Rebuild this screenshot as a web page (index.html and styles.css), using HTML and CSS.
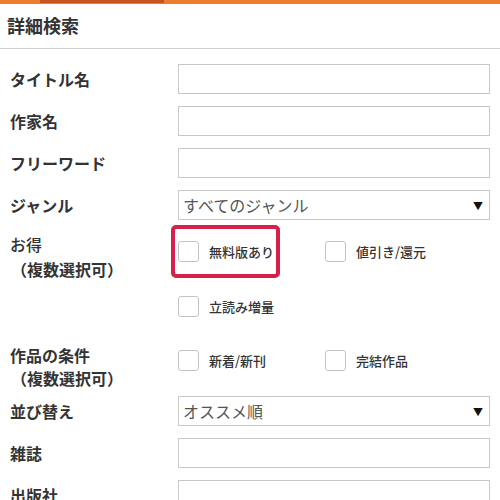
FILE: index.html
```html
<!DOCTYPE html>
<html lang="ja">
<head>
<meta charset="utf-8">
<title>詳細検索</title>
<link rel="stylesheet" href="styles.css">
</head>
<body>
<div class="topbar"><span class="topbar-dark"></span></div>
<header class="page-head"><h1 class="page-title">詳細検索</h1></header>
<form class="search-form">
  <div class="row">
    <label class="row-label">タイトル名</label>
    <div class="text-input"></div>
  </div>
  <div class="row">
    <label class="row-label">作家名</label>
    <div class="text-input"></div>
  </div>
  <div class="row">
    <label class="row-label">フリーワード</label>
    <div class="text-input"></div>
  </div>
  <div class="row">
    <label class="row-label">ジャンル</label>
    <div class="select-box"><span class="select-text">すべてのジャンル</span><span class="select-arrow">▼</span></div>
  </div>
  <div class="row row-checks row-deal">
    <div class="row-label multi"><span class="main light">お得</span><br><span class="sub">（複数選択可）</span></div>
    <div class="check-grid">
      <div class="check-item highlighted"><span class="check"></span><span class="check-text">無料版あり</span></div>
      <div class="check-item"><span class="check"></span><span class="check-text">値引き/還元</span></div>
      <div class="check-item"><span class="check"></span><span class="check-text">立読み増量</span></div>
    </div>
  </div>
  <div class="row row-checks row-cond">
    <div class="row-label multi"><span class="main">作品の条件</span><br><span class="sub">（複数選択可）</span></div>
    <div class="check-grid">
      <div class="check-item"><span class="check"></span><span class="check-text">新着/新刊</span></div>
      <div class="check-item"><span class="check"></span><span class="check-text">完結作品</span></div>
    </div>
  </div>
  <div class="row">
    <label class="row-label">並び替え</label>
    <div class="select-box"><span class="select-text">オススメ順</span><span class="select-arrow">▼</span></div>
  </div>
  <div class="row">
    <label class="row-label">雑誌</label>
    <div class="text-input"></div>
  </div>
  <div class="row">
    <label class="row-label">出版社</label>
    <div class="text-input"></div>
  </div>
</form>
</body>
</html>
```
FILE: styles.css
```css
html, body {
  margin: 0;
  padding: 0;
  background: #fff;
  overflow: hidden;
}
body {
  font-family: "Noto Sans CJK JP", "Noto Sans", sans-serif;
  color: #333;
  width: 500px;
  height: 500px;
}
.topbar {
  height: 4px;
  background: #ee7b2f;
  display: flex;
}
.topbar-dark {
  margin-left: 40px;
  width: 124px;
  height: 3px;
  background: #c9541c;
}
.page-head {
  height: 44px;
  border-bottom: 1px solid #cfcfcf;
  display: flex;
  align-items: center;
  padding-left: 7px;
}
.page-title {
  margin: 0;
  font-size: 18px;
  font-weight: bold;
  color: #333;
  line-height: 1;
  position: relative;
  top: -1px;
}
.search-form {
  display: flex;
  flex-direction: column;
  gap: 12px;
  padding: 15px 10px 0 10px;
}
.row {
  display: flex;
  align-items: center;
}
.row-label {
  width: 168px;
  flex: none;
  font-size: 16px;
  font-weight: bold;
  color: #333;
  line-height: 24px;
}
.text-input,
.select-box {
  flex: 1;
  height: 30px;
  box-sizing: border-box;
  border: 1px solid #c8c8c8;
  background: #fff;
}
.select-box {
  display: flex;
  align-items: center;
  justify-content: space-between;
  padding: 0 6px 0 4px;
}
.select-text {
  font-size: 16px;
  color: #555;
}
.select-arrow {
  font-size: 10px;
  color: #111;
}
.row-checks {
  align-items: flex-start;
}
.row-label.multi {
  line-height: 25px;
}
.row-label .light {
  font-weight: 500;
}
.row-label .sub {
  display: inline-block;
  margin-left: 1px;
}
.check-grid {
  flex: 1;
  display: grid;
  grid-template-columns: 147px 1fr;
  row-gap: 34px;
}
.row-deal .check-grid {
  padding-top: 9px;
}
.row-cond {
  margin-top: 15px;
}
.row-cond .row-label.multi {
  line-height: 23px;
  margin-bottom: -6px;
}
.row-cond .check-grid {
  padding-top: 6px;
}
.check-item {
  display: flex;
  align-items: center;
  gap: 10px;
  position: relative;
}
.check {
  width: 21px;
  height: 21px;
  box-sizing: border-box;
  border: 1px solid #c4c4c4;
  border-radius: 3px;
  background: #fff;
  flex: none;
}
.check-text {
  font-size: 13px;
  color: #333;
  font-weight: 500;
}
.highlighted::after {
  content: "";
  position: absolute;
  left: -7px;
  top: -16px;
  width: 109px;
  height: 53px;
  box-sizing: border-box;
  border: 4px solid #d8204c;
  border-radius: 5px;
}
```
